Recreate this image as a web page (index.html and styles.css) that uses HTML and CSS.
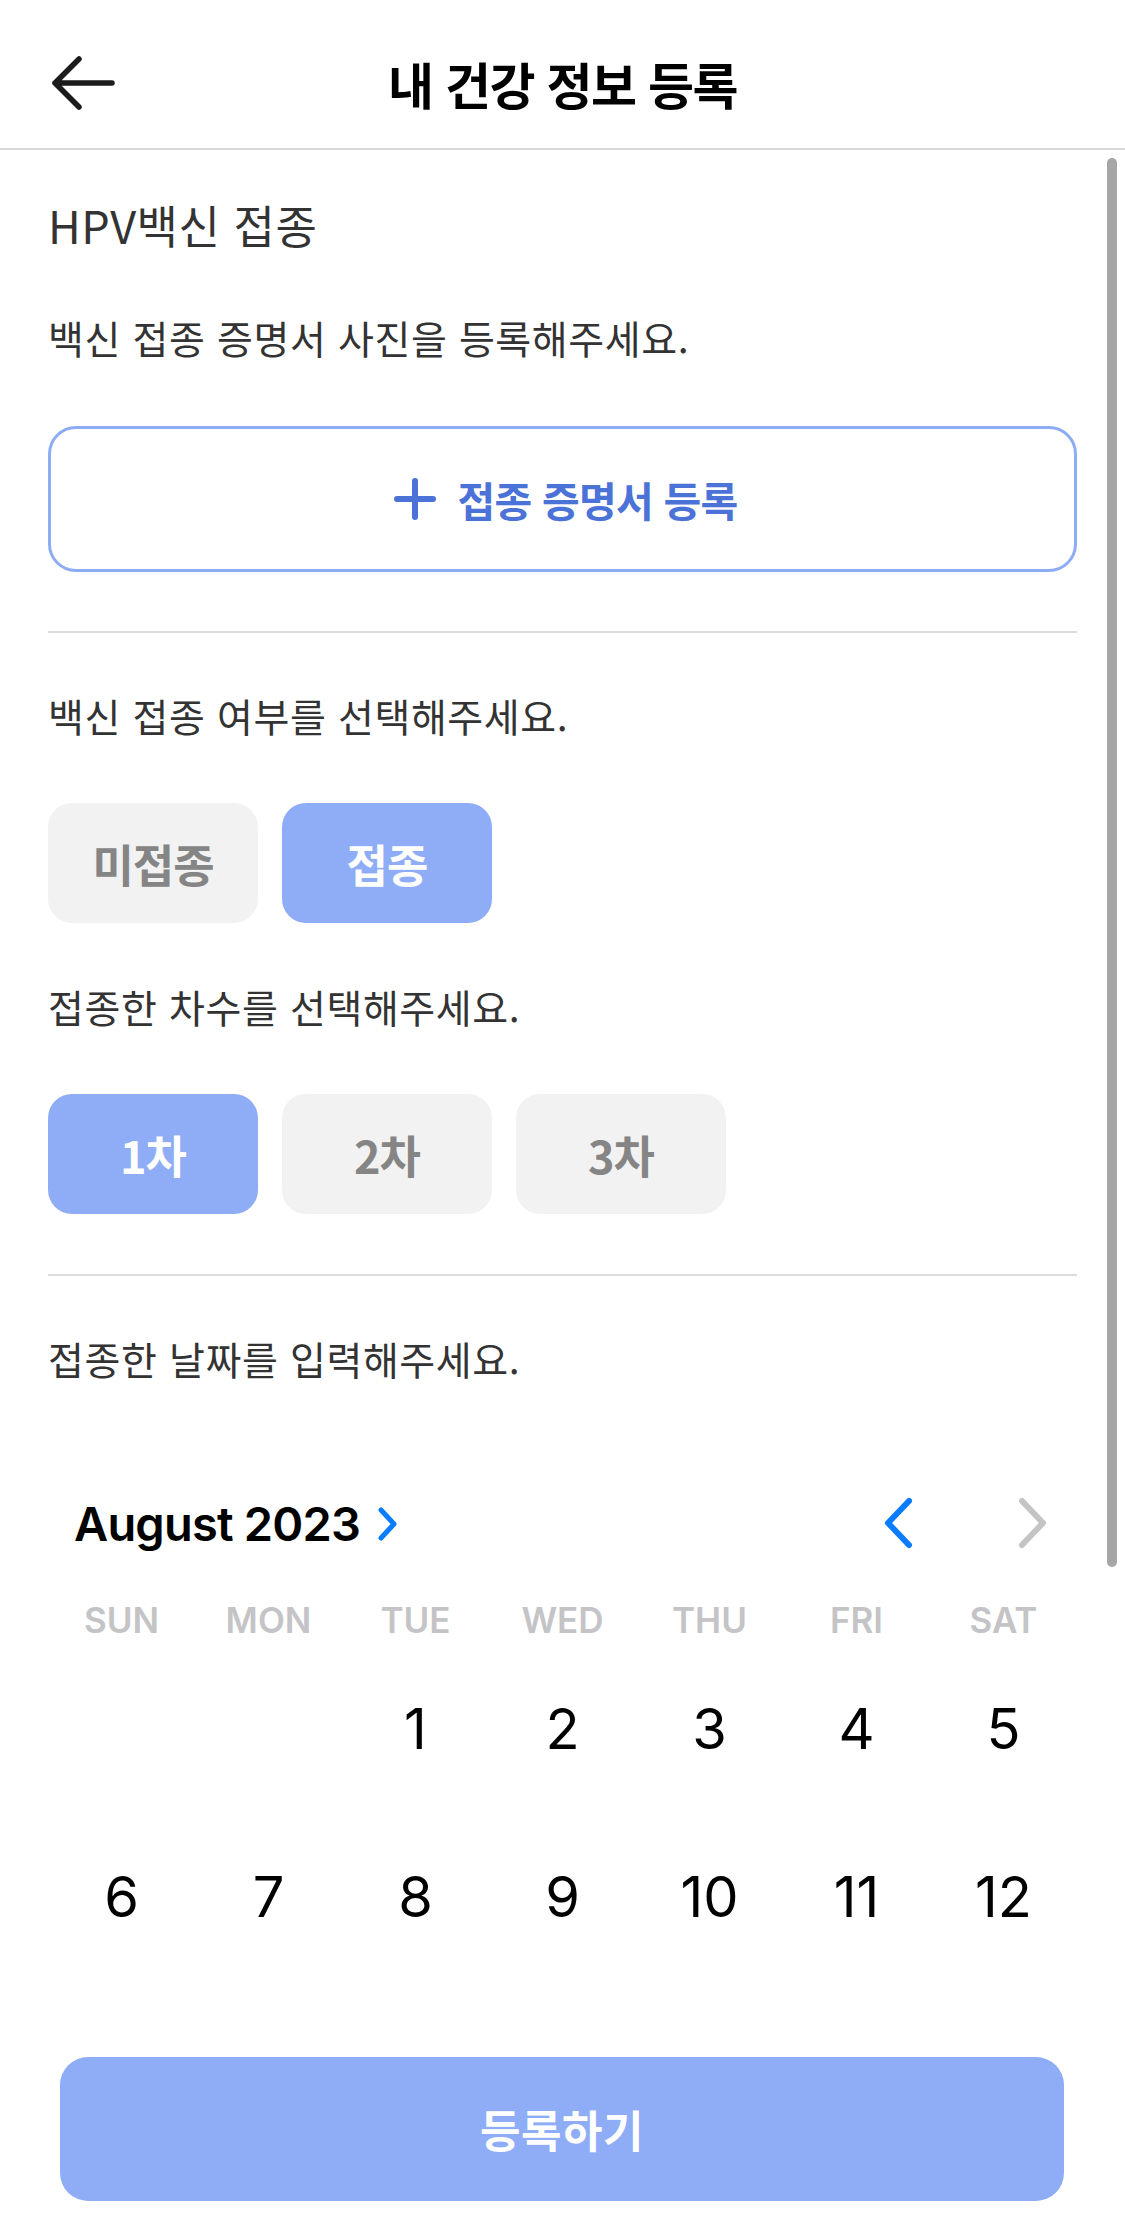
FILE: index.html
```html
<!DOCTYPE html>
<html lang="ko">
<head>
<meta charset="utf-8">
<title>내 건강 정보 등록</title>
<link rel="stylesheet" href="styles.css">
</head>
<body>
<div class="screen">
  <header class="topbar">
    <button class="back" aria-label="뒤로">
      <svg width="64" height="56" viewBox="0 0 64 56"><path d="M61 28H4M28 4L4 28L28 52" fill="none" stroke="#1c1c1c" stroke-width="5.5" stroke-linecap="round" stroke-linejoin="round"/></svg>
    </button>
    <h1 class="title">내 건강 정보 등록</h1>
    <span class="spacer"></span>
  </header>

  <main class="scroll">
    <div class="scrollbar"></div>

    <h2 class="section-title">HPV백신 접종</h2>
    <p class="prompt prompt-first">백신 접종 증명서 사진을 등록해주세요.</p>
    <button class="upload">
      <svg width="42" height="42" viewBox="0 0 42 42"><path d="M21 3V39M3 21H39" fill="none" stroke="#4b72d7" stroke-width="6" stroke-linecap="round"/></svg>
      <span>접종 증명서 등록</span>
    </button>

    <hr class="divider">

    <p class="prompt">백신 접종 여부를 선택해주세요.</p>
    <div class="chips">
      <button class="chip">미접종</button>
      <button class="chip chip-on">접종</button>
    </div>

    <p class="prompt prompt-mid">접종한 차수를 선택해주세요.</p>
    <div class="chips">
      <button class="chip chip-on">1차</button>
      <button class="chip">2차</button>
      <button class="chip">3차</button>
    </div>

    <hr class="divider">

    <p class="prompt">접종한 날짜를 입력해주세요.</p>

    <div class="calendar">
      <div class="cal-head">
        <span class="month">August 2023</span>
        <svg class="month-chev" width="22" height="36" viewBox="0 0 22 36"><path d="M4 4L17 18L4 32" fill="none" stroke="#0a7cff" stroke-width="5" stroke-linecap="round" stroke-linejoin="round"/></svg>
        <div class="nav">
          <svg width="32" height="52" viewBox="0 0 32 52"><path d="M27 4L6 26L27 48" fill="none" stroke="#0a7cff" stroke-width="6" stroke-linecap="round" stroke-linejoin="round"/></svg>
          <svg width="32" height="52" viewBox="0 0 32 52"><path d="M5 4L26 26L5 48" fill="none" stroke="#c4c4c7" stroke-width="6" stroke-linecap="round" stroke-linejoin="round"/></svg>
        </div>
      </div>
      <div class="weekdays">
        <span>SUN</span><span>MON</span><span>TUE</span><span>WED</span><span>THU</span><span>FRI</span><span>SAT</span>
      </div>
      <div class="days">
        <span></span><span></span><span>1</span><span>2</span><span>3</span><span>4</span><span>5</span>
        <span>6</span><span>7</span><span>8</span><span>9</span><span>10</span><span>11</span><span>12</span>
      </div>
    </div>
  </main>

  <footer class="footer">
    <button class="submit">등록하기</button>
  </footer>
</div>
</body>
</html>
```

FILE: styles.css
```css
* { box-sizing: border-box; }

html, body {
  margin: 0;
  padding: 0;
  background: #ffffff;
}

body {
  font-family: "Noto Sans CJK KR", "Noto Sans", sans-serif;
  color: #333333;
}

button {
  font-family: inherit;
  border: none;
  background: none;
  padding: 0;
  margin: 0;
  cursor: pointer;
}

.screen {
  width: 1125px;
  height: 2238px;
  display: flex;
  flex-direction: column;
  overflow: hidden;
}

/* Header */
.topbar {
  height: 150px;
  padding-top: 18px;
  border-bottom: 2px solid #d9d9d9;
  display: grid;
  grid-template-columns: 1fr auto 1fr;
  align-items: center;
  flex: none;
}

.back {
  justify-self: start;
  margin-left: 51px;
  width: 64px;
  height: 56px;
  display: flex;
}

.title {
  margin: 0;
  font-size: 50px;
  line-height: 1;
  font-weight: 700;
  color: #000000;
  letter-spacing: -1.5px;
}

/* Scroll area */
.scroll {
  position: relative;
  flex: 1;
  overflow: hidden;
  padding: 0 48px;
}

.scrollbar {
  position: absolute;
  top: 8px;
  right: 8px;
  width: 10px;
  height: 1409px;
  border-radius: 5px;
  background: #a6a6a6;
}

.section-title {
  margin: 45px 0 0;
  font-size: 45px;
  line-height: 60px;
  font-weight: 400;
  color: #333333;
  letter-spacing: 0.5px;
}

.prompt {
  margin: 52px 0 0;
  font-size: 39px;
  line-height: 60px;
  color: #333333;
  letter-spacing: 0.6px;
}

.prompt-mid {
  margin-top: 53px;
}

/* Upload button */
.upload {
  margin-top: 59px;
  width: 100%;
  height: 146px;
  border: 3px solid #8eacf4;
  border-radius: 28px;
  display: flex;
  align-items: center;
  justify-content: center;
  gap: 22px;
  color: #4b72d7;
  font-size: 41px;
  font-weight: 700;
  letter-spacing: -0.8px;
  padding-left: 6px;
}

.upload svg { flex: none; }

.divider {
  margin: 59px 0 0;
  border: none;
  height: 2px;
  background: #dcdcdc;
}

.divider + .prompt { margin-top: 52px; }

/* Chips */
.chips {
  margin-top: 58px;
  display: flex;
  gap: 24px;
}

.chips + .divider { margin-top: 60px; }

.chip {
  width: 210px;
  height: 120px;
  border-radius: 24px;
  background: #f2f2f2;
  color: #858585;
  font-size: 45px;
  font-weight: 700;
  letter-spacing: -1px;
}

.chip-on {
  background: #8fadf7;
  color: #ffffff;
}

/* Calendar */
.calendar {
  margin-top: 95px;
  font-family: "Inter", "Liberation Sans", sans-serif;
}

.cal-head {
  height: 80px;
  display: flex;
  align-items: center;
  padding: 0 28px 0 26px;
}

.month {
  font-size: 47px;
  font-weight: 600;
  color: #000000;
  letter-spacing: -0.8px;
}

.month-chev {
  margin-left: 17px;
  margin-top: 2px;
}

.nav {
  margin-left: auto;
  display: flex;
  gap: 103px;
}

.weekdays {
  margin-top: 32px;
  height: 50px;
  display: grid;
  grid-template-columns: repeat(7, 1fr);
  align-items: center;
  text-align: center;
  font-size: 35px;
  font-weight: 600;
  color: #c4c4c6;
  line-height: 50px;
}

.days {
  display: grid;
  grid-template-columns: repeat(7, 1fr);
  grid-auto-rows: 168px;
  align-items: center;
  text-align: center;
  font-size: 56px;
  font-weight: 400;
  color: #000000;
  line-height: 168px;
}

/* Footer */
.footer {
  flex: none;
  padding: 30px 61px 37px 60px;
  background: #ffffff;
}

.submit {
  width: 100%;
  height: 144px;
  border-radius: 28px;
  background: #8fadf7;
  color: #ffffff;
  font-size: 44px;
  font-weight: 700;
  letter-spacing: 0.5px;
}
```
